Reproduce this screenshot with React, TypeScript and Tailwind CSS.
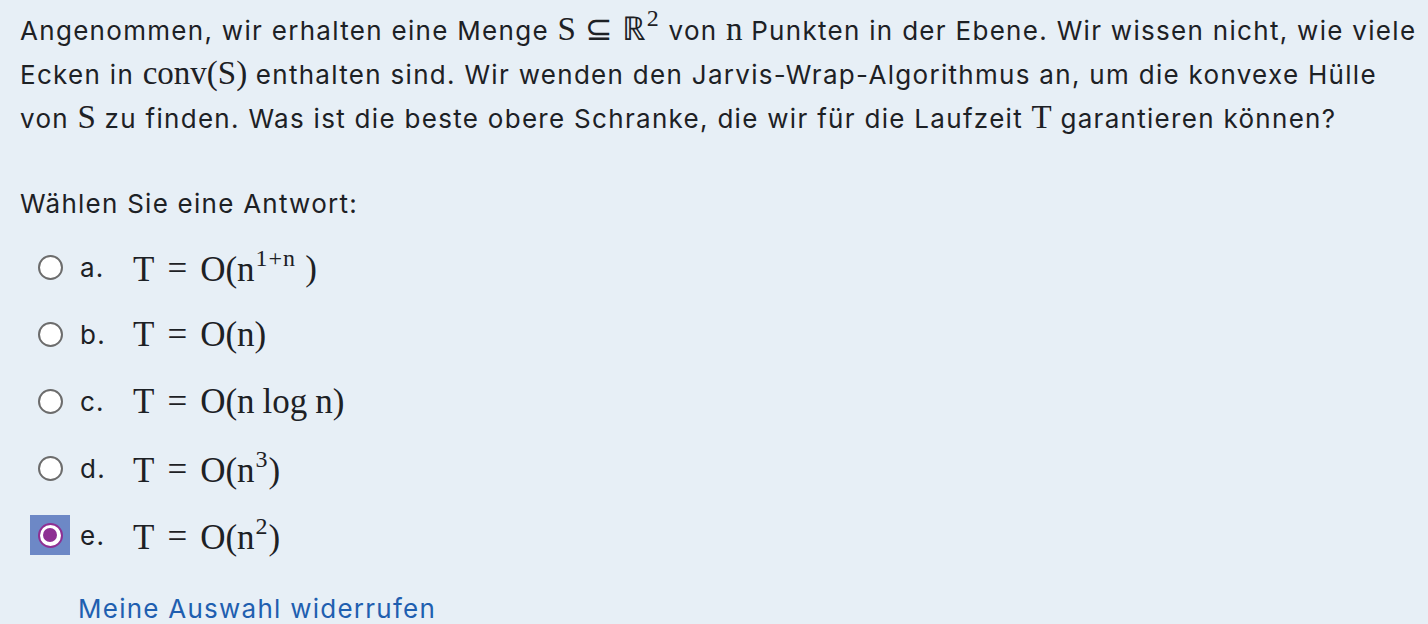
import React from "react";

const M = ({ children }: { children: React.ReactNode }) => (
  <span className="font-['Liberation_Serif',serif] text-[33px] leading-none tracking-normal">{children}</span>
);

const Sup = ({ children }: { children: React.ReactNode }) => (
  <sup className="relative -top-[2px] ml-[1px] text-[24px] align-super leading-none tracking-[1px]">{children}</sup>
);

type Option = { key: string; math: React.ReactNode; selected?: boolean };

const Eq = () => <span className="mx-[13px]">=</span>;

const options: Option[] = [
  {
    key: "a.",
    math: (
      <>
        T<Eq />O(n<Sup>1+n</Sup>
        <span className="ml-[9px]">)</span>
      </>
    ),
  },
  {
    key: "b.",
    math: (
      <>
        T<Eq />O(n)
      </>
    ),
  },
  {
    key: "c.",
    math: (
      <>
        T<Eq />O(n<span className="ml-[8px]">log</span>
        <span className="ml-[8px]">n)</span>
      </>
    ),
  },
  {
    key: "d.",
    math: (
      <>
        T<Eq />O(n<Sup>3</Sup>)
      </>
    ),
  },
  {
    key: "e.",
    math: (
      <>
        T<Eq />O(n<Sup>2</Sup>)
      </>
    ),
    selected: true,
  },
];

const Radio = ({ selected }: { selected?: boolean }) =>
  selected ? (
    <div className="w-[40px] h-[40px] bg-[#6d88c6] flex items-center justify-center">
      <div className="w-[25px] h-[25px] rounded-full bg-white border-[2.5px] border-[#8e2f93] flex items-center justify-center">
        <div className="w-[14px] h-[14px] rounded-full bg-[#8e2f93]" />
      </div>
    </div>
  ) : (
    <div className="w-[40px] h-[40px] flex items-center justify-center">
      <div className="w-[25px] h-[25px] rounded-full bg-white border-2 border-[#6c6c6c]" />
    </div>
  );

export default function App() {
  return (
    <div className="w-[1428px] h-[624px] overflow-hidden bg-[#e7eff6] text-[#1d2125] font-['Inter',sans-serif] text-[26px] tracking-[1.3px]">
      <div className="pl-[20px] pt-[8px] leading-[44px] whitespace-nowrap">
        <p>
          Angenommen, wir erhalten eine Menge <M>S</M>
          <M>
            <span className="mx-[9px]">⊆</span>ℝ<Sup>2</Sup>
          </M>{" "}
          von <M>n</M> Punkten in der Ebene. Wir wissen nicht, wie viele
          <br />
          Ecken in <M>conv(S)</M> enthalten sind. Wir wenden den Jarvis-Wrap-Algorithmus an, um die konvexe Hülle
          <br />
          von <M>S</M> zu finden. Was ist die beste obere Schranke, die wir für die Laufzeit <M>T</M> garantieren können?
        </p>
      </div>
      <div className="pl-[20px] mt-[41px] leading-[44px] tracking-[1.25px]">Wählen Sie eine Antwort:</div>
      <div className="pl-[30px] mt-[21px] flex flex-col gap-[27px] tracking-[1.25px]">
        {options.map((o) => (
          <div key={o.key} className="flex items-center h-[40px]">
            <Radio selected={o.selected} />
            <span className="ml-[10px] w-[53px]">{o.key}</span>
            <span className="font-['Liberation_Serif',serif] text-[35px] leading-none whitespace-pre tracking-normal">{o.math}</span>
          </div>
        ))}
      </div>
      <div className="pl-[78px] mt-[32px] tracking-[1.25px]">
        <a className="text-[#1f5fb0] leading-[44px]">Meine Auswahl widerrufen</a>
      </div>
    </div>
  );
}
